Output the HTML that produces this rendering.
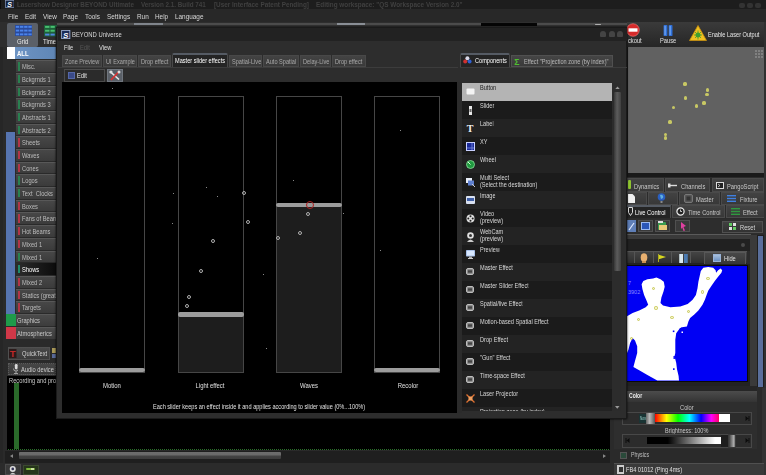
<!DOCTYPE html>
<html><head><meta charset="utf-8"><title>BEYOND Universe</title>
<style>
html,body{margin:0;padding:0;}
body{width:766px;height:475px;overflow:hidden;background:#2a2a2a;position:relative;font-family:"Liberation Sans",sans-serif;}
div,span.t,svg{position:absolute;box-sizing:border-box;}
span.t{white-space:nowrap;transform-origin:0 0;line-height:1;filter:blur(0.3px);}
</style></head><body>

<div style="left:0px;top:0px;width:766px;height:10px;background:#1d1d1d;"></div>
<svg style="left:4.5px;top:0px" width="9.5" height="8" viewBox="0 0 9.5 8"><rect width="9.5" height="8" fill="#12203c"/><rect x="0.4" y="0.4" width="8.7" height="7.2" fill="none" stroke="#8a9ab8" stroke-width="0.7"/><text x="2" y="6.9" font-family="Liberation Sans, sans-serif" font-weight="bold" font-style="italic" font-size="7.5" fill="#ffffff">S</text></svg>
<div style="left:0px;top:0px;width:1.2px;height:475px;background:#0c0c0c;"></div>
<span class="t" style="left:17px;top:1px;color:#404040;font-size:7.5px;transform:scaleX(0.84);font-weight:bold;">Lasershow Designer BEYOND Ultimate</span>
<span class="t" style="left:141px;top:1px;color:#404040;font-size:7.5px;transform:scaleX(0.84);font-weight:bold;">Version 2.1. Build 741</span>
<span class="t" style="left:214px;top:1px;color:#404040;font-size:7.5px;transform:scaleX(0.85);font-weight:bold;">[User Interface Patent Pending]</span>
<span class="t" style="left:316px;top:1px;color:#404040;font-size:7.5px;transform:scaleX(0.85);font-weight:bold;">Editing workspace: "QS Workspace Version 2.0"</span>
<div style="left:739px;top:3px;width:6px;height:5px;background:#333;border-radius:2px;"></div>
<div style="left:747px;top:3px;width:6px;height:5px;background:#333;border-radius:2px;"></div>
<div style="left:755px;top:3px;width:6px;height:5px;background:#333;border-radius:2px;"></div>
<div style="left:0px;top:9.3px;width:766px;height:13px;background:#282828;"></div>
<span class="t" style="left:8px;top:12.7px;color:#d8d8d8;font-size:8px;transform:scaleX(0.8);">File</span>
<span class="t" style="left:24.5px;top:12.7px;color:#d8d8d8;font-size:8px;transform:scaleX(0.8);">Edit</span>
<span class="t" style="left:42.5px;top:12.7px;color:#d8d8d8;font-size:8px;transform:scaleX(0.8);">View</span>
<span class="t" style="left:63px;top:12.7px;color:#d8d8d8;font-size:8px;transform:scaleX(0.8);">Page</span>
<span class="t" style="left:85px;top:12.7px;color:#d8d8d8;font-size:8px;transform:scaleX(0.8);">Tools</span>
<span class="t" style="left:107px;top:12.7px;color:#d8d8d8;font-size:8px;transform:scaleX(0.8);">Settings</span>
<span class="t" style="left:137px;top:12.7px;color:#d8d8d8;font-size:8px;transform:scaleX(0.8);">Run</span>
<span class="t" style="left:155px;top:12.7px;color:#d8d8d8;font-size:8px;transform:scaleX(0.8);">Help</span>
<span class="t" style="left:175px;top:12.7px;color:#d8d8d8;font-size:8px;transform:scaleX(0.8);">Language</span>
<div style="left:0px;top:22px;width:766px;height:25px;background:#2e2e2e;"></div>
<div style="left:57px;top:22.5px;width:570px;height:2px;background:#4c4c4c;"></div>
<div style="left:57px;top:24.5px;width:570px;height:2.5px;background:#343434;"></div>
<div style="left:337px;top:23px;width:28px;height:2px;background:#8a8f96;"></div>
<div style="left:595px;top:23.5px;width:6px;height:1.8px;background:#b0b0b0;border-radius:1px;"></div>
<div style="left:134px;top:23px;width:29px;height:2px;background:#80858c;"></div>
<div style="left:481px;top:23px;width:56px;height:3px;background:#050505;"></div>
<div style="left:7px;top:23px;width:31px;height:24px;background:#5b6068;border-radius:2px;"></div>
<svg style="left:14.5px;top:25.3px" width="17.5" height="11.2" viewBox="0 0 21 12" preserveAspectRatio="none"><rect width="21" height="12" fill="#2a4a9a"/><g fill="#4a84ec"><rect x="1" y="1" width="4" height="2"/><rect x="6" y="1" width="4" height="2"/><rect x="11" y="1" width="4" height="2"/><rect x="16" y="1" width="4" height="2"/><rect x="1" y="5" width="4" height="2"/><rect x="6" y="5" width="4" height="2"/><rect x="11" y="5" width="4" height="2"/><rect x="16" y="5" width="4" height="2"/><rect x="1" y="9" width="4" height="2"/><rect x="6" y="9" width="4" height="2"/><rect x="11" y="9" width="4" height="2"/><rect x="16" y="9" width="4" height="2"/></g></svg>
<span class="t" style="left:17px;top:38px;color:#e8e8e8;font-size:7.5px;transform:scaleX(0.8);">Grid</span>
<svg style="left:44px;top:25px" width="13" height="11.5" viewBox="0 0 12 12" preserveAspectRatio="none"><rect width="12" height="12" fill="#1f5f3a"/><g fill="#48c070"><rect x="1" y="1" width="4" height="2"/><rect x="6" y="1" width="4" height="2"/><rect x="1" y="5" width="4" height="2"/><rect x="6" y="5" width="4" height="2"/></g><g fill="#4f86e0"><rect x="1" y="9" width="4" height="2"/><rect x="6" y="9" width="4" height="2"/></g></svg>
<span class="t" style="left:43px;top:38px;color:#e8e8e8;font-size:7.5px;transform:scaleX(0.8);">Timel</span>
<div style="left:0px;top:47px;width:57px;height:300px;background:#2a2a2a;"></div>
<div style="left:0px;top:47px;width:3px;height:428px;background:#262626;"></div>
<div style="left:7px;top:47px;width:50px;height:12.3px;background:linear-gradient(90deg,#7096c6,#5f86b6);"></div>
<div style="left:6.8px;top:47px;width:8px;height:12.3px;background:#ffffff;"></div>
<span class="t" style="left:16.8px;top:50px;color:#ffffff;font-size:7px;transform:scaleX(0.85);font-weight:bold;">ALL</span>
<div style="left:15.8px;top:60.3px;width:40.2px;height:11.7px;background:linear-gradient(#474747,#3b3b3b);border-top:1px solid #585858;"></div>
<div style="left:17.6px;top:62.3px;width:2.6px;height:8.3px;background:#2a8050;"></div>
<span class="t" style="left:22.3px;top:63.3px;color:#bcbcbc;font-size:7px;transform:scaleX(0.82);">Misc.</span>
<div style="left:15.8px;top:72.98px;width:40.2px;height:11.7px;background:linear-gradient(#474747,#3b3b3b);border-top:1px solid #585858;"></div>
<div style="left:17.6px;top:74.98px;width:2.6px;height:8.3px;background:#2a8050;"></div>
<span class="t" style="left:22.3px;top:75.98px;color:#bcbcbc;font-size:7px;transform:scaleX(0.82);">Bckgrnds 1</span>
<div style="left:15.8px;top:85.66px;width:40.2px;height:11.7px;background:linear-gradient(#474747,#3b3b3b);border-top:1px solid #585858;"></div>
<div style="left:17.6px;top:87.66px;width:2.6px;height:8.3px;background:#2a8050;"></div>
<span class="t" style="left:22.3px;top:88.66px;color:#bcbcbc;font-size:7px;transform:scaleX(0.82);">Bckgrnds 2</span>
<div style="left:15.8px;top:98.34px;width:40.2px;height:11.7px;background:linear-gradient(#474747,#3b3b3b);border-top:1px solid #585858;"></div>
<div style="left:17.6px;top:100.34px;width:2.6px;height:8.3px;background:#2a8050;"></div>
<span class="t" style="left:22.3px;top:101.34px;color:#bcbcbc;font-size:7px;transform:scaleX(0.82);">Bckgrnds 3</span>
<div style="left:15.8px;top:111.02px;width:40.2px;height:11.7px;background:linear-gradient(#474747,#3b3b3b);border-top:1px solid #585858;"></div>
<div style="left:17.6px;top:113.02px;width:2.6px;height:8.3px;background:#2a8050;"></div>
<span class="t" style="left:22.3px;top:114.02px;color:#bcbcbc;font-size:7px;transform:scaleX(0.82);">Abstracts 1</span>
<div style="left:15.8px;top:123.7px;width:40.2px;height:11.7px;background:linear-gradient(#474747,#3b3b3b);border-top:1px solid #585858;"></div>
<div style="left:17.6px;top:125.7px;width:2.6px;height:8.3px;background:#2a8050;"></div>
<span class="t" style="left:22.3px;top:126.7px;color:#bcbcbc;font-size:7px;transform:scaleX(0.82);">Abstracts 2</span>
<div style="left:15.8px;top:136.38px;width:40.2px;height:11.7px;background:linear-gradient(#474747,#3b3b3b);border-top:1px solid #585858;"></div>
<div style="left:17.6px;top:138.38px;width:2.6px;height:8.3px;background:#b03548;"></div>
<span class="t" style="left:22.3px;top:139.38px;color:#bcbcbc;font-size:7px;transform:scaleX(0.82);">Sheets</span>
<div style="left:15.8px;top:149.06px;width:40.2px;height:11.7px;background:linear-gradient(#474747,#3b3b3b);border-top:1px solid #585858;"></div>
<div style="left:17.6px;top:151.06px;width:2.6px;height:8.3px;background:#b03548;"></div>
<span class="t" style="left:22.3px;top:152.06px;color:#bcbcbc;font-size:7px;transform:scaleX(0.82);">Waves</span>
<div style="left:15.8px;top:161.74px;width:40.2px;height:11.7px;background:linear-gradient(#474747,#3b3b3b);border-top:1px solid #585858;"></div>
<div style="left:17.6px;top:163.74px;width:2.6px;height:8.3px;background:#b03548;"></div>
<span class="t" style="left:22.3px;top:164.74px;color:#bcbcbc;font-size:7px;transform:scaleX(0.82);">Cones</span>
<div style="left:15.8px;top:174.42px;width:40.2px;height:11.7px;background:linear-gradient(#474747,#3b3b3b);border-top:1px solid #585858;"></div>
<div style="left:17.6px;top:176.42px;width:2.6px;height:8.3px;background:#2a8050;"></div>
<span class="t" style="left:22.3px;top:177.42px;color:#bcbcbc;font-size:7px;transform:scaleX(0.82);">Logos</span>
<div style="left:15.8px;top:187.1px;width:40.2px;height:11.7px;background:linear-gradient(#474747,#3b3b3b);border-top:1px solid #585858;"></div>
<div style="left:17.6px;top:189.1px;width:2.6px;height:8.3px;background:#2a8050;"></div>
<span class="t" style="left:22.3px;top:190.1px;color:#bcbcbc;font-size:7px;transform:scaleX(0.82);">Text&nbsp; Clocks</span>
<div style="left:15.8px;top:199.78px;width:40.2px;height:11.7px;background:linear-gradient(#474747,#3b3b3b);border-top:1px solid #585858;"></div>
<div style="left:17.6px;top:201.78px;width:2.6px;height:8.3px;background:#b03548;"></div>
<span class="t" style="left:22.3px;top:202.78px;color:#bcbcbc;font-size:7px;transform:scaleX(0.82);">Boxes</span>
<div style="left:15.8px;top:212.46px;width:40.2px;height:11.7px;background:linear-gradient(#474747,#3b3b3b);border-top:1px solid #585858;"></div>
<div style="left:17.6px;top:214.46px;width:2.6px;height:8.3px;background:#b03548;"></div>
<span class="t" style="left:22.3px;top:215.46px;color:#bcbcbc;font-size:7px;transform:scaleX(0.82);">Fans of Beam</span>
<div style="left:15.8px;top:225.14px;width:40.2px;height:11.7px;background:linear-gradient(#474747,#3b3b3b);border-top:1px solid #585858;"></div>
<div style="left:17.6px;top:227.14px;width:2.6px;height:8.3px;background:#b03548;"></div>
<span class="t" style="left:22.3px;top:228.14px;color:#bcbcbc;font-size:7px;transform:scaleX(0.82);">Hot Beams</span>
<div style="left:15.8px;top:237.82px;width:40.2px;height:11.7px;background:linear-gradient(#474747,#3b3b3b);border-top:1px solid #585858;"></div>
<div style="left:17.6px;top:239.82px;width:2.6px;height:8.3px;background:#b03548;"></div>
<span class="t" style="left:22.3px;top:240.82px;color:#bcbcbc;font-size:7px;transform:scaleX(0.82);">Mixed 1</span>
<div style="left:15.8px;top:250.5px;width:40.2px;height:11.7px;background:linear-gradient(#474747,#3b3b3b);border-top:1px solid #585858;"></div>
<div style="left:17.6px;top:252.5px;width:2.6px;height:8.3px;background:#2a8050;"></div>
<span class="t" style="left:22.3px;top:253.5px;color:#bcbcbc;font-size:7px;transform:scaleX(0.82);">Mixed 1</span>
<div style="left:15.8px;top:263.18px;width:40.2px;height:11.7px;background:linear-gradient(90deg,#2c2c2c,#0c0c0c);"></div>
<div style="left:17.6px;top:265.18px;width:2.6px;height:8.3px;background:#208a6a;"></div>
<span class="t" style="left:22.3px;top:266.18px;color:#ffffff;font-size:7px;transform:scaleX(0.82);">Shows</span>
<div style="left:15.8px;top:275.86px;width:40.2px;height:11.7px;background:linear-gradient(#474747,#3b3b3b);border-top:1px solid #585858;"></div>
<div style="left:17.6px;top:277.86px;width:2.6px;height:8.3px;background:#b03548;"></div>
<span class="t" style="left:22.3px;top:278.86px;color:#bcbcbc;font-size:7px;transform:scaleX(0.82);">Mixed 2</span>
<div style="left:15.8px;top:288.54px;width:40.2px;height:11.7px;background:linear-gradient(#474747,#3b3b3b);border-top:1px solid #585858;"></div>
<div style="left:17.6px;top:290.54px;width:2.6px;height:8.3px;background:#b03548;"></div>
<span class="t" style="left:22.3px;top:291.54px;color:#bcbcbc;font-size:7px;transform:scaleX(0.82);">Statics (great</span>
<div style="left:15.8px;top:301.22px;width:40.2px;height:11.7px;background:linear-gradient(#474747,#3b3b3b);border-top:1px solid #585858;"></div>
<div style="left:17.6px;top:303.22px;width:2.6px;height:8.3px;background:#b03548;"></div>
<span class="t" style="left:22.3px;top:304.22px;color:#bcbcbc;font-size:7px;transform:scaleX(0.82);">Targets</span>
<div style="left:6.3px;top:132px;width:8.7px;height:181.7px;background:#5674b0;"></div>
<div style="left:7px;top:314.0px;width:50px;height:12px;background:linear-gradient(#4b4b4b,#3c3c3c);border-top:1px solid #585858;"></div>
<div style="left:6.3px;top:313.7px;width:9.3px;height:12.3px;background:#1f9a4a;"></div>
<span class="t" style="left:17px;top:317.0px;color:#c8c8c8;font-size:7px;transform:scaleX(0.82);">Graphics</span>
<div style="left:7px;top:326.8px;width:50px;height:12px;background:linear-gradient(#4b4b4b,#3c3c3c);border-top:1px solid #585858;"></div>
<div style="left:6.3px;top:326.5px;width:9.3px;height:12.3px;background:#d03848;"></div>
<span class="t" style="left:17px;top:329.8px;color:#c8c8c8;font-size:7px;transform:scaleX(0.82);">Atmospherics</span>
<div style="left:7.5px;top:347px;width:42.5px;height:13px;background:linear-gradient(#484848,#3a3a3a);border:1px solid #505050;"></div>
<svg style="left:9px;top:349px" width="7.5" height="9" viewBox="0 0 7.5 9"><rect width="7.5" height="9" fill="#2a1a1a"/><text x="0.7" y="8" font-family="Liberation Sans, sans-serif" font-weight="bold" font-size="9.5" fill="#c02828">T</text></svg>
<span class="t" style="left:22px;top:349.5px;color:#d0d0d0;font-size:7px;transform:scaleX(0.82);">QuickText</span>
<div style="left:51.5px;top:348px;width:4.5px;height:4.5px;background:#a89858;"></div>
<div style="left:51.5px;top:353.5px;width:4.5px;height:4.5px;background:#5a6a98;"></div>
<div style="left:8.4px;top:363px;width:48px;height:11.7px;background:linear-gradient(#464646,#3a3a3a);border:1px dotted #5a5a5a;"></div>
<svg style="left:12.5px;top:364px" width="5.5" height="10" viewBox="0 0 6 11"><rect x="2" y="0" width="3" height="6" rx="1.5" fill="#ddd"/><path d="M0.5 5a2.8 2.8 0 0 0 5.6 0M3.3 8v2M1 10.5h4.5" stroke="#bbb" fill="none" stroke-width="0.9"/></svg>
<span class="t" style="left:21px;top:365.5px;color:#d0d0d0;font-size:7px;transform:scaleX(0.82);">Audio device</span>
<div style="left:6.5px;top:376.3px;width:603.5px;height:74.2px;background:#000;"></div>
<span class="t" style="left:9px;top:377px;color:#c8c8c8;font-size:7px;transform:scaleX(0.82);">Recording and pro</span>
<div style="left:14px;top:383px;width:5.3px;height:66px;background:#2a6a2a;"></div>
<div style="left:8px;top:448.8px;width:601px;height:1.2px;background:repeating-linear-gradient(90deg,#2a6e2a 0 1px,transparent 1px 2px);"></div>
<div style="left:5px;top:450.5px;width:605px;height:12.7px;background:#1f1f1f;"></div>
<div style="left:19px;top:451.7px;width:588px;height:3.6px;background-image:radial-gradient(#444 0.5px,transparent 0.7px);background-size:2px 1.8px;"></div>
<div style="left:19px;top:452px;width:261.5px;height:7.3px;background:linear-gradient(#6e6e6e,#6a6a6a 45%,#444 55%,#3c3c3c);border-radius:1px;"></div>
<svg style="left:10px;top:454px" width="3" height="4" viewBox="0 0 4 5"><path d="M4 0L0 2.5L4 5z" fill="#888"/></svg>
<svg style="left:603px;top:454px" width="3" height="4" viewBox="0 0 4 5"><path d="M0 0L4 2.5L0 5z" fill="#888"/></svg>
<div style="left:0px;top:463.2px;width:614px;height:11.8px;background:#2b2b2b;"></div>
<div style="left:4.5px;top:464px;width:16px;height:11px;background:#383838;border:1px solid #4a4a4a;"></div>
<svg style="left:9px;top:464.7px" width="7.5" height="10" viewBox="0 0 10 12"><circle cx="5" cy="4.5" r="4" fill="#ddd"/><circle cx="5" cy="4.5" r="1.8" fill="#335"/><path d="M1 12q4-5 8 0z" fill="#ccc"/></svg>
<div style="left:22.7px;top:464.5px;width:16px;height:10.5px;background:#25351a;border:1px solid #3c4a30;"></div>
<div style="left:26px;top:467.7px;width:8.5px;height:2.6px;background:#7fb83a;border-radius:1px;"></div>
<div style="left:30.5px;top:468.2px;width:3.5px;height:1.6px;background:#c8e0a0;"></div>
<div style="left:627px;top:22px;width:139px;height:25px;background:linear-gradient(#3a3a3a,#262626);"></div>
<svg style="left:627px;top:23px" width="14" height="14" viewBox="0 0 14 14"><circle cx="6" cy="7" r="6.3" fill="#d62a2a"/><circle cx="6" cy="7" r="6.3" fill="none" stroke="#f08080" stroke-width="0.6"/><rect x="1.5" y="5.3" width="9" height="3.4" fill="#fff"/></svg>
<span class="t" style="left:628px;top:37px;color:#e0e0e0;font-size:7px;transform:scaleX(0.82);">ckout</span>
<svg style="left:663px;top:25px" width="10.5" height="11" viewBox="0 0 12 13"><rect x="0.5" y="0" width="4.5" height="13" rx="1" fill="#2f6fd8"/><rect x="6.5" y="0" width="4.5" height="13" rx="1" fill="#2f6fd8"/><rect x="1.5" y="1" width="1.5" height="11" fill="#6fa4f0"/><rect x="7.5" y="1" width="1.5" height="11" fill="#6fa4f0"/></svg>
<span class="t" style="left:660px;top:37px;color:#e0e0e0;font-size:7px;transform:scaleX(0.82);">Pause</span>
<svg style="left:689px;top:25px" width="18" height="16" viewBox="0 0 18 16"><path d="M9 0.5L17.5 15.5H0.5z" fill="#f0c020" stroke="#c89010" stroke-width="0.8"/><circle cx="9" cy="10" r="2.5" fill="#40a030"/><path d="M9 5.5v9M5 10h8M6 7l6 6M12 7l-6 6" stroke="#40a030" stroke-width="0.8"/></svg>
<span class="t" style="left:708px;top:31px;color:#e8e8e8;font-size:7px;transform:scaleX(0.8);">Enable Laser Output</span>
<div style="left:627px;top:47px;width:139px;height:130px;background:#1a1a1a;"></div>
<div style="left:628px;top:46.5px;width:136px;height:126.3px;background:#616161;"></div>
<svg style="left:755px;top:50px" width="8" height="8" viewBox="0 0 8 8"><g fill="#808080"><rect x="0" y="0" width="2" height="2"/><rect x="3" y="0" width="2" height="2"/><rect x="6" y="0" width="2" height="2"/><rect x="0" y="3" width="2" height="2"/><rect x="3" y="3" width="2" height="2"/><rect x="6" y="3" width="2" height="2"/><rect x="0" y="6" width="2" height="2"/><rect x="3" y="6" width="2" height="2"/><rect x="6" y="6" width="2" height="2"/></g></svg>
<div style="left:683.4px;top:82.4px;width:3.2px;height:3.2px;border-radius:50%;background:#c8c864;"></div>
<div style="left:705.9px;top:88.4px;width:3.2px;height:3.2px;border-radius:50%;background:#c8c864;"></div>
<div style="left:705.4px;top:93.10000000000001px;width:3.2px;height:3.2px;border-radius:50%;background:#c8c864;"></div>
<div style="left:684.0px;top:96.4px;width:3.2px;height:3.2px;border-radius:50%;background:#c8c864;"></div>
<div style="left:702.4px;top:101.4px;width:3.2px;height:3.2px;border-radius:50%;background:#c8c864;"></div>
<div style="left:694.9px;top:104.4px;width:3.2px;height:3.2px;border-radius:50%;background:#c8c864;"></div>
<div style="left:672.1999999999999px;top:105.80000000000001px;width:3.2px;height:3.2px;border-radius:50%;background:#c8c864;"></div>
<div style="left:668.4px;top:120.4px;width:3.2px;height:3.2px;border-radius:50%;background:#c8c864;"></div>
<div style="left:664.0px;top:133.0px;width:3.2px;height:3.2px;border-radius:50%;background:#c8c864;"></div>
<div style="left:664.0px;top:136.4px;width:3.2px;height:3.2px;border-radius:50%;background:#c8c864;"></div>
<div style="left:627px;top:176.5px;width:139px;height:60px;background:#2b2b2b;"></div>
<div style="left:620px;top:178px;width:44px;height:14px;background:linear-gradient(#424242,#383838);border:1px solid #4a4a4a;"></div>
<span class="t" style="left:634px;top:182.5px;color:#c8c8c8;font-size:7px;transform:scaleX(0.82);">Dynamics</span>
<div style="left:627.6px;top:180px;width:3.2px;height:8.5px;background:#8fc430;border-radius:1px;"></div>
<div style="left:665px;top:178px;width:45px;height:14px;background:linear-gradient(#424242,#383838);border:1px solid #4a4a4a;"></div>
<span class="t" style="left:681px;top:182.5px;color:#c8c8c8;font-size:7px;transform:scaleX(0.82);">Channels</span>
<svg style="left:668px;top:183px" width="9" height="5" viewBox="0 0 9 5"><rect x="0" y="0.5" width="2.5" height="4" fill="#ddd"/><rect x="2" y="1.8" width="7" height="1.4" fill="#ddd"/></svg>
<div style="left:711.5px;top:178px;width:52.5px;height:14px;background:linear-gradient(#424242,#383838);border:1px solid #4a4a4a;"></div>
<span class="t" style="left:727px;top:182.5px;color:#c8c8c8;font-size:7px;transform:scaleX(0.82);">PangoScript</span>
<svg style="left:716px;top:182px" width="8" height="7" viewBox="0 0 8 7"><rect x="0.5" y="0.5" width="7" height="6" fill="#222" stroke="#ddd" stroke-width="1"/><path d="M2 2l2 1.5L2 5" stroke="#ddd" fill="none" stroke-width="0.8"/></svg>
<div style="left:620px;top:192px;width:27px;height:13px;background:linear-gradient(#424242,#383838);border:1px solid #4a4a4a;"></div>
<svg style="left:628px;top:194px" width="7" height="9" viewBox="0 0 7 9"><path d="M0 0h4.5L7 2.5V9H0z" fill="#f0f0f0"/></svg>
<div style="left:648px;top:192px;width:30px;height:13px;background:linear-gradient(#424242,#383838);border:1px solid #4a4a4a;"></div>
<svg style="left:657px;top:193px" width="9" height="10" viewBox="0 0 9 10"><circle cx="4.5" cy="4" r="3.8" fill="#2a5fc0"/><path d="M3 2q2-1 3 1t-2 3z" fill="#5fb0e0"/><rect x="3.5" y="8" width="2" height="2" fill="#888"/></svg>
<div style="left:679px;top:192px;width:41px;height:13px;background:linear-gradient(#424242,#383838);border:1px solid #4a4a4a;"></div>
<span class="t" style="left:696px;top:195.5px;color:#c8c8c8;font-size:7px;transform:scaleX(0.82);">Master</span>
<svg style="left:684px;top:194px" width="9" height="9" viewBox="0 0 9 9"><rect x="0.5" y="0.5" width="8" height="8" rx="1.5" fill="#555" stroke="#777"/><rect x="2.5" y="2.5" width="4" height="4" fill="#333"/></svg>
<div style="left:721px;top:192px;width:44px;height:13px;background:linear-gradient(#424242,#383838);border:1px solid #4a4a4a;"></div>
<span class="t" style="left:740px;top:195.5px;color:#c8c8c8;font-size:7px;transform:scaleX(0.82);">Fixture</span>
<svg style="left:727px;top:195px" width="9" height="7" viewBox="0 0 9 7"><g fill="#3f7fe0"><rect y="0" width="9" height="1.4"/><rect y="2.8" width="9" height="1.4"/><rect y="5.6" width="9" height="1.4"/></g></svg>
<div style="left:620px;top:205px;width:51px;height:13px;background:#242424;border:1px solid #4a4a4a;border-bottom:none;border-top:2px solid #555b64;"></div>
<span class="t" style="left:635px;top:208.5px;color:#ffffff;font-size:7px;transform:scaleX(0.82);">Live Control</span>
<svg style="left:628px;top:207px" width="5" height="9" viewBox="0 0 5 9"><path d="M0.5 0.5h4v5l-2 3l-2-3z" fill="none" stroke="#ddd" stroke-width="1"/></svg>
<div style="left:672px;top:205px;width:53px;height:13px;background:linear-gradient(#424242,#383838);border:1px solid #4a4a4a;"></div>
<span class="t" style="left:688px;top:208.5px;color:#c8c8c8;font-size:7px;transform:scaleX(0.82);">Time Control</span>
<svg style="left:676px;top:207px" width="9" height="9" viewBox="0 0 9 9"><circle cx="4.5" cy="4.5" r="3.6" fill="#222" stroke="#eee" stroke-width="1.2"/><path d="M4.5 2.5v2h1.5" stroke="#eee" fill="none" stroke-width="0.8"/></svg>
<div style="left:726px;top:205px;width:39px;height:13px;background:linear-gradient(#424242,#383838);border:1px solid #4a4a4a;"></div>
<span class="t" style="left:743px;top:208.5px;color:#c8c8c8;font-size:7px;transform:scaleX(0.82);">Effect</span>
<svg style="left:731px;top:208px" width="9" height="7" viewBox="0 0 9 7"><g fill="#2f9a3f"><rect y="0" width="9" height="1.4"/><rect y="2.8" width="9" height="1.4"/><rect y="5.6" width="9" height="1.4"/></g></svg>
<div style="left:627px;top:219px;width:139px;height:15px;background:#2d2d2d;"></div>
<div style="left:627px;top:220px;width:9px;height:12px;background:#5f7fb8;"></div>
<svg style="left:628px;top:222px" width="7" height="9" viewBox="0 0 7 9"><path d="M1 8L6 1" stroke="#dfe8ff" stroke-width="1.2"/></svg>
<div style="left:638px;top:220px;width:15px;height:12px;background:#3a3a3a;border:1px solid #505050;"></div>
<div style="left:641px;top:222px;width:9px;height:8px;background:#2a56b8;border:1px solid #9ab8f0;"></div>
<div style="left:655px;top:220px;width:15px;height:12px;background:#3a3a3a;border:1px solid #505050;"></div>
<div style="left:658px;top:222px;width:8px;height:8px;background:#3a9a50;border-radius:1px;"></div>
<div style="left:659px;top:225px;width:8px;height:5px;background:#e8c878;"></div>
<div style="left:658px;top:221px;width:5px;height:2px;background:#e0e0e0;"></div>
<div style="left:674.5px;top:220px;width:15px;height:12px;background:#3a3a3a;border:1px solid #505050;"></div>
<svg style="left:679.5px;top:222px" width="7" height="9" viewBox="0 0 7 9"><path d="M1 0L6 4L3.5 5L5 8.5L3.5 9L2.3 5.6L1 7z" fill="#e040a0"/></svg>
<div style="left:721.5px;top:220.5px;width:41px;height:12.5px;background:linear-gradient(#404040,#323232);border:1px solid #505050;"></div>
<svg style="left:729px;top:223px" width="7" height="7" viewBox="0 0 7 7"><g fill="#60c860"><rect x="0" y="0" width="3" height="3"/><rect x="4" y="4" width="3" height="3"/></g><g fill="#e0e0e0"><rect x="4" y="0" width="3" height="3"/><rect x="0" y="4" width="3" height="3"/></g></svg>
<span class="t" style="left:740px;top:224px;color:#d8d8d8;font-size:7px;transform:scaleX(0.82);">Reset</span>
<div style="left:627px;top:237px;width:124px;height:150px;background:#2b2b2b;"></div>
<div style="left:627px;top:234px;width:124px;height:1px;background:#5a5a5a;"></div>
<div style="left:627px;top:235px;width:124px;height:4px;background:#3a3a3a;"></div>
<div style="left:627px;top:239px;width:124px;height:12px;background:#212121;"></div>
<div style="left:741px;top:243px;width:4px;height:4px;background:#4a4a4a;border-radius:2px;"></div>
<div style="left:627px;top:251px;width:120px;height:13px;background:linear-gradient(#444,#2e2e2e);border-top:1px solid #555;border-bottom:1px solid #222;"></div>
<div style="left:634px;top:252px;width:1px;height:11px;background:#555;"></div>
<div style="left:653px;top:252px;width:1px;height:11px;background:#555;"></div>
<div style="left:671px;top:252px;width:1px;height:11px;background:#555;"></div>
<div style="left:690px;top:252px;width:1px;height:11px;background:#555;"></div>
<svg style="left:640px;top:253px" width="8" height="10" viewBox="0 0 8 10"><ellipse cx="4" cy="4.5" rx="3.3" ry="4.3" fill="#e8b070"/><rect x="2" y="8" width="4" height="2" fill="#c89050"/></svg>
<svg style="left:658px;top:254px" width="8" height="8" viewBox="0 0 8 8"><path d="M0 0.5L8 3L0 5.5z" fill="#d8d820"/><rect x="0" y="0" width="1" height="8" fill="#aa2"/></svg>
<svg style="left:678.5px;top:253.5px" width="9" height="9.5" viewBox="0 0 9 10"><rect width="4" height="10" fill="#d8e8f0"/><rect x="5" width="4" height="10" fill="#4a7ab0"/></svg>
<div style="left:704px;top:251.5px;width:41.5px;height:13px;background:linear-gradient(#484848,#363636);border:1px solid #585858;"></div>
<div style="left:713px;top:253.5px;width:7.5px;height:8px;background:linear-gradient(#a8c0dc,#6a90c4);border:1px solid #9ab4d8;"></div>
<span class="t" style="left:723.5px;top:254.5px;color:#e0e0e0;font-size:7px;transform:scaleX(0.82);">Hide</span>
<div style="left:627px;top:264px;width:124px;height:122px;background:#222;"></div>
<div style="left:627px;top:265px;width:121px;height:117px;background:#0a0a0a;"></div>
<div style="left:627px;top:266px;width:119.5px;height:114.5px;background:#0000f4;"></div>
<svg style="left:627px;top:266px" width="119.5" height="114.5" viewBox="627 266 119.5 114.5">
<path fill="#ffffff" d="M627 316.3 L632.6 313 L639.2 310.5 L645.7 307.2 L648.2 304.8 L646.6 300.7 L644.1 294.9 L642.4 289.1 L641.6 284.2 L643.3 280.9 L647.4 279.3 L653.1 278.4 L656.4 277.6 L660.5 279.3 L663.8 281.7 L664.7 286.7 L663.5 291.6 L661.4 297.4 L660.5 303.1 L663 305.6 L670.4 307.2 L680.3 306.4 L687.7 303.9 L692.6 299.8 L695.9 294.9 L697.5 288.3 L698.4 281.7 L699.7 276 L700.8 271 L703.3 267.8 L708.2 266.9 L713.2 267.8 L715.6 270.2 L716.1 272.7 L718.1 270.2 L720.6 268.6 L722.2 270.2 L721.4 272.7 L718.1 276.8 L714.8 280.9 L711.5 285.8 L708.2 290.8 L706.6 294.9 L704.9 299.8 L702.5 304.8 L698.4 310.5 L694.3 314.6 L690.1 317.9 L688.5 321.2 L686.9 326.6 L680.3 327.4 L678.6 329.9 L676.2 333.2 L675.3 339.7 L675.3 352.9 L674.5 356.2 L676.2 362.8 L677 369.3 L678.6 375.9 L679 380.5 L657.3 380.5 L647.4 375.1 L639.2 370.2 L633.4 366.9 L635 361.1 L637.2 352.9 L637.2 346.3 L635 340.6 L632.6 338.1 L630.1 343 L628.5 349.6 L627 352.9 Z"/>
<g fill="#0000f4"><rect x="672.8" y="330.5" width="1.6" height="1.6"/><rect x="673.5" y="356" width="1.4" height="3"/><rect x="673" y="368.3" width="1.6" height="1.6"/></g>
<g fill="#ffffff"><rect x="681.5" y="331.5" width="1.5" height="1.5"/><rect x="679" y="326" width="1.8" height="2"/></g>
<text x="628" y="285" font-size="5.5" fill="#8a8aff" font-family="Liberation Sans, sans-serif">7</text>
<text x="628" y="293.5" font-size="5.5" fill="#8a8aff" font-family="Liberation Sans, sans-serif">3902</text>
</svg>
<div style="left:651.9px;top:286.9px;width:3.2px;height:3.2px;border-radius:50%;border:0.8px solid #c8c858;background:#f4f4c8;"></div>
<div style="left:706.4px;top:276.7px;width:3.2px;height:3.2px;border-radius:50%;border:0.8px solid #c8c858;background:#f4f4c8;"></div>
<div style="left:700.8px;top:290.4px;width:3.2px;height:3.2px;border-radius:50%;border:0.8px solid #c8c858;background:#f4f4c8;"></div>
<div style="left:654.4px;top:306.4px;width:3.2px;height:3.2px;border-radius:50%;border:0.8px solid #c8c858;background:#f4f4c8;"></div>
<div style="left:686.6px;top:310.2px;width:3.2px;height:3.2px;border-radius:50%;border:0.8px solid #c8c858;background:#f4f4c8;"></div>
<div style="left:670.4px;top:315.9px;width:3.2px;height:3.2px;border-radius:50%;border:0.8px solid #c8c858;background:#f4f4c8;"></div>
<div style="left:636.9px;top:318.2px;width:3.2px;height:3.2px;border-radius:50%;border:0.8px solid #c8c858;background:#f4f4c8;"></div>
<div style="left:629.8px;top:337.2px;width:3.2px;height:3.2px;border-radius:50%;border:0.8px solid #c8c858;background:#f4f4c8;"></div>
<div style="left:750px;top:235px;width:7px;height:151px;background:#3a3a3a;"></div>
<div style="left:757px;top:235px;width:7px;height:152px;background:#1e1e1e;"></div>
<div style="left:758px;top:236px;width:5px;height:151px;background:#5a6f9c;"></div>
<div style="left:764px;top:22px;width:2px;height:453px;background:#303030;"></div>
<div style="left:761.5px;top:388px;width:4.5px;height:87px;background:#333;"></div>
<div style="left:614px;top:386px;width:143px;height:5px;background:#262626;"></div>
<div style="left:614px;top:391px;width:143px;height:11px;background:linear-gradient(#4c4c4c,#343434);"></div>
<span class="t" style="left:628.5px;top:393.3px;color:#e8e8e8;font-size:6.8px;transform:scaleX(0.74);font-weight:bold;">Color</span>
<div style="left:614px;top:402px;width:143px;height:48px;background:#2e2e2e;"></div>
<span class="t" style="left:679.5px;top:403.8px;color:#c8c8c8;font-size:7px;transform:scaleX(0.82);">Color</span>
<div style="left:622px;top:411.5px;width:130px;height:13px;background:#2c2c2c;border:1px solid #484848;"></div>
<div style="left:639.4px;top:413.5px;width:7px;height:9px;background:#1a3434;"></div>
<span class="t" style="left:639.8px;top:416px;color:#9fd8d0;font-size:5px;transform:scaleX(0.62);">None</span>
<div style="left:645.7px;top:412.8px;width:9.3px;height:11px;background:linear-gradient(90deg,#666,#b8b8b8 40%,#888 70%,#555);"></div>
<div style="left:655px;top:414px;width:63.5px;height:8px;background:linear-gradient(90deg,#ff0000,#ffff00 18%,#00ff00 36%,#00ffff 54%,#0000ff 72%,#ff00ff 88%,#ff0060);"></div>
<div style="left:718.5px;top:414px;width:11px;height:8px;background:#ffffff;"></div>
<svg style="left:745px;top:415.5px" width="5" height="5" viewBox="0 0 4 5"><path d="M0 0L3 2.5L0 5zM3 0h1v5H3z" fill="#0c0c0c"/></svg>
<span class="t" style="left:665px;top:426.8px;color:#c8c8c8;font-size:7px;transform:scaleX(0.79);">Brightness: 100%</span>
<div style="left:622px;top:434px;width:130px;height:13.5px;background:#2c2c2c;border:1px solid #484848;"></div>
<div style="left:646.5px;top:437.3px;width:74.5px;height:7px;background:linear-gradient(90deg,#000 0,#000 28%,#fff 92%);"></div>
<div style="left:721px;top:435px;width:6.5px;height:11.5px;background:#1e1e1e;"></div>
<div style="left:727.5px;top:434px;width:8.5px;height:13.5px;background:linear-gradient(90deg,#3a3a3a,#a8a8a8 75%,#777);border:1px solid #3a3a3a;"></div>
<svg style="left:624.5px;top:438px" width="5" height="5" viewBox="0 0 4 5"><path d="M4 0L1 2.5L4 5zM0 0h1v5H0z" fill="#0c0c0c"/></svg>
<svg style="left:745px;top:438px" width="5" height="5" viewBox="0 0 4 5"><path d="M0 0L3 2.5L0 5zM3 0h1v5H3z" fill="#0c0c0c"/></svg>
<div style="left:614px;top:449px;width:143px;height:14px;background:#2a2a2a;"></div>
<div style="left:614px;top:449px;width:143px;height:14px;background-image:radial-gradient(#484848 0.5px,transparent 0.6px);background-size:2px 2px;"></div>
<div style="left:620px;top:452px;width:7px;height:7px;background:#2a4a3a;border:1px solid #555;"></div>
<span class="t" style="left:630.5px;top:451.2px;color:#c0c0c0;font-size:7px;transform:scaleX(0.75);">Physics</span>
<div style="left:614px;top:463px;width:150px;height:12px;background:#3a3a3a;border-top:1px solid #505050;"></div>
<div style="left:617px;top:465px;width:7px;height:9px;background:#ccc;"></div>
<div style="left:619px;top:467px;width:4px;height:5px;background:#333;"></div>
<span class="t" style="left:625.5px;top:466px;color:#e0e0e0;font-size:7px;transform:scaleX(0.8);">FB4 01012 (Ping 4ms)</span>
<div style="left:56px;top:26.5px;width:571px;height:392px;background:#2d2d2d;border:1px solid #1a1a1a;box-shadow:0 0 2px #000;"></div>
<div style="left:58px;top:28px;width:569px;height:13px;background:#222;"></div>
<svg style="left:61px;top:30px" width="9.5" height="9" viewBox="0 0 9 9"><rect width="9" height="9" fill="#1a2c58"/><rect x="0.4" y="0.4" width="8.2" height="8.2" fill="none" stroke="#a8b8d8" stroke-width="0.8"/><text x="1.8" y="7.6" font-family="Liberation Sans, sans-serif" font-weight="bold" font-style="italic" font-size="8" fill="#ffffff">S</text></svg>
<span class="t" style="left:72px;top:31px;color:#d8d8d8;font-size:7px;transform:scaleX(0.84);">BEYOND Universe</span>
<div style="left:600px;top:31px;width:6px;height:6px;border-radius:3px 3px 1px 1px;background:#444;"></div>
<div style="left:608.5px;top:31px;width:6px;height:6px;border-radius:3px 3px 1px 1px;background:#444;"></div>
<div style="left:617px;top:31px;width:6px;height:6px;border-radius:3px 3px 1px 1px;background:#444;"></div>
<span class="t" style="left:64px;top:43.5px;color:#e0e0e0;font-size:7px;transform:scaleX(0.82);">File</span>
<span class="t" style="left:80px;top:43.5px;color:#555;font-size:7px;transform:scaleX(0.82);">Edit</span>
<span class="t" style="left:98.5px;top:43.5px;color:#e0e0e0;font-size:7px;transform:scaleX(0.82);">View</span>
<div style="left:62px;top:55px;width:40px;height:12px;background:linear-gradient(#434343,#3a3a3a);border:1px solid #484848;"></div>
<span class="t" style="left:65px;top:57.5px;color:#a8a8a8;font-size:7px;transform:scaleX(0.8);">Zone Preview</span>
<div style="left:103px;top:55px;width:34px;height:12px;background:linear-gradient(#434343,#3a3a3a);border:1px solid #484848;"></div>
<span class="t" style="left:106px;top:57.5px;color:#a8a8a8;font-size:7px;transform:scaleX(0.8);">UI Example</span>
<div style="left:138px;top:55px;width:33px;height:12px;background:linear-gradient(#434343,#3a3a3a);border:1px solid #484848;"></div>
<span class="t" style="left:141px;top:57.5px;color:#a8a8a8;font-size:7px;transform:scaleX(0.8);">Drop effect</span>
<div style="left:172px;top:52.7px;width:56px;height:15.3px;background:#242424;border:1px solid #484848;border-bottom:none;border-top:2px solid #555b64;border-radius:2px 2px 0 0;"></div>
<span class="t" style="left:175px;top:56.5px;color:#ffffff;font-size:7px;transform:scaleX(0.8);">Master slider effects</span>
<div style="left:229px;top:55px;width:33px;height:12px;background:linear-gradient(#434343,#3a3a3a);border:1px solid #484848;"></div>
<span class="t" style="left:232px;top:57.5px;color:#a8a8a8;font-size:7px;transform:scaleX(0.8);">Spatial-Live</span>
<div style="left:263px;top:55px;width:36px;height:12px;background:linear-gradient(#434343,#3a3a3a);border:1px solid #484848;"></div>
<span class="t" style="left:266px;top:57.5px;color:#a8a8a8;font-size:7px;transform:scaleX(0.8);">Auto Spatial</span>
<div style="left:300px;top:55px;width:31px;height:12px;background:linear-gradient(#434343,#3a3a3a);border:1px solid #484848;"></div>
<span class="t" style="left:303px;top:57.5px;color:#a8a8a8;font-size:7px;transform:scaleX(0.8);">Delay-Live</span>
<div style="left:332px;top:55px;width:34px;height:12px;background:linear-gradient(#434343,#3a3a3a);border:1px solid #484848;"></div>
<span class="t" style="left:335px;top:57.5px;color:#a8a8a8;font-size:7px;transform:scaleX(0.8);">Drop effect</span>
<div style="left:58px;top:67px;width:400px;height:1px;background:#3c3c3c;"></div>
<div style="left:64px;top:69px;width:41px;height:13px;background:#2b2b2b;border:1px solid #4c4c4c;"></div>
<div style="left:68px;top:71.5px;width:6.5px;height:7.5px;background:#3a4a88;border:1px solid #5568a8;"></div>
<span class="t" style="left:77.3px;top:72px;color:#e8e8e8;font-size:7px;transform:scaleX(0.82);">Edit</span>
<div style="left:107px;top:69px;width:16px;height:13px;background:#5a6068;border:1px solid #70767e;"></div>
<svg style="left:109px;top:70px" width="12" height="11" viewBox="0 0 12 11"><path d="M1 1.5L10 9.5" stroke="#e8e8e8" stroke-width="1.6"/><path d="M10.5 1L2 10" stroke="#d83030" stroke-width="1.8"/><circle cx="2" cy="2" r="1.6" fill="#ddd"/><circle cx="10" cy="2" r="1.5" fill="#ddd"/></svg>
<div style="left:62px;top:82px;width:395px;height:330.5px;background:#000;"></div>
<div style="left:78.5px;top:96px;width:66px;height:276.5px;background:#000;border:1px solid #464646;"></div>
<div style="left:78.5px;top:368.2px;width:66px;height:4.3px;background:#9c9c9c;border-radius:2px;"></div>
<div style="left:177.5px;top:96px;width:66px;height:276.5px;background:#000;border:1px solid #464646;"></div>
<div style="left:178.5px;top:314.5px;width:64px;height:57.0px;background:#1d1d1d;"></div>
<div style="left:177.5px;top:312.3px;width:66px;height:4.3px;background:#9c9c9c;border-radius:2px;"></div>
<div style="left:275.8px;top:96px;width:66px;height:276.5px;background:#000;border:1px solid #464646;"></div>
<div style="left:276.8px;top:205px;width:64px;height:166.5px;background:#1d1d1d;"></div>
<div style="left:275.8px;top:202.8px;width:66px;height:4.3px;background:#9c9c9c;border-radius:2px;"></div>
<div style="left:374.3px;top:96px;width:66px;height:276.5px;background:#000;border:1px solid #464646;"></div>
<div style="left:374.3px;top:368.2px;width:66px;height:4.3px;background:#9c9c9c;border-radius:2px;"></div>
<span class="t" style="left:72px;top:382px;width:80px;text-align:center;color:#e0e0e0;font-size:7px;transform:scaleX(0.85);transform-origin:50% 0;">Motion</span>
<span class="t" style="left:170px;top:382px;width:80px;text-align:center;color:#e0e0e0;font-size:7px;transform:scaleX(0.85);transform-origin:50% 0;">Light effect</span>
<span class="t" style="left:269px;top:382px;width:80px;text-align:center;color:#e0e0e0;font-size:7px;transform:scaleX(0.85);transform-origin:50% 0;">Waves</span>
<span class="t" style="left:368px;top:382px;width:80px;text-align:center;color:#e0e0e0;font-size:7px;transform:scaleX(0.85);transform-origin:50% 0;">Recolor</span>
<span class="t" style="left:153px;top:403px;color:#e0e0e0;font-size:7px;transform:scaleX(0.8);">Each slider keeps an effect inside it and applies according to slider value (0%...100%)</span>
<div style="left:241.5px;top:190.6px;width:4px;height:4px;border-radius:50%;border:0.8px solid #b0b0b0;"></div>
<div style="left:245.5px;top:220.2px;width:4px;height:4px;border-radius:50%;border:0.8px solid #b0b0b0;"></div>
<div style="left:210.5px;top:239px;width:4px;height:4px;border-radius:50%;border:0.8px solid #b0b0b0;"></div>
<div style="left:199.4px;top:268.7px;width:4px;height:4px;border-radius:50%;border:0.8px solid #b0b0b0;"></div>
<div style="left:187px;top:295px;width:4px;height:4px;border-radius:50%;border:0.8px solid #b0b0b0;"></div>
<div style="left:185px;top:303.7px;width:4px;height:4px;border-radius:50%;border:0.8px solid #b0b0b0;"></div>
<div style="left:275.8px;top:235.7px;width:4px;height:4px;border-radius:50%;border:0.8px solid #b0b0b0;"></div>
<div style="left:298px;top:230.6px;width:4px;height:4px;border-radius:50%;border:0.8px solid #b0b0b0;"></div>
<div style="left:306px;top:212.4px;width:4px;height:4px;border-radius:50%;border:0.8px solid #b0b0b0;"></div>
<div style="left:305.8px;top:200.7px;width:8px;height:8px;border-radius:50%;border:1px solid #b02020;"></div>
<div style="left:112px;top:88px;width:1px;height:1px;background:#888;"></div>
<div style="left:173px;top:192.5px;width:1px;height:1px;background:#888;"></div>
<div style="left:205.5px;top:187px;width:1px;height:1px;background:#888;"></div>
<div style="left:216.5px;top:195.5px;width:1px;height:1px;background:#888;"></div>
<div style="left:293px;top:180px;width:1px;height:1px;background:#888;"></div>
<div style="left:400px;top:130px;width:1px;height:1px;background:#888;"></div>
<div style="left:97px;top:258px;width:1px;height:1px;background:#888;"></div>
<div style="left:262.5px;top:274px;width:1px;height:1px;background:#888;"></div>
<div style="left:266px;top:348px;width:1px;height:1px;background:#888;"></div>
<div style="left:380px;top:250px;width:1px;height:1px;background:#888;"></div>
<div style="left:171.5px;top:222.5px;width:1px;height:1px;background:#888;"></div>
<div style="left:342.5px;top:212.5px;width:1px;height:1px;background:#888;"></div>
<div style="left:457px;top:82px;width:5px;height:331px;background:#2b2b2b;"></div>
<div style="left:460px;top:52.7px;width:50px;height:15.3px;background:#242424;border:1px solid #484848;border-bottom:none;border-top:2px solid #555b64;border-radius:2px 2px 0 0;"></div>
<svg style="left:463px;top:56px" width="9" height="8" viewBox="0 0 9 8"><circle cx="2.2" cy="5.5" r="2" fill="#d03030"/><circle cx="6.6" cy="5.5" r="2" fill="#3060d0"/><circle cx="4.4" cy="2.2" r="2" fill="#d8d8e8"/></svg>
<span class="t" style="left:475px;top:56.5px;color:#ffffff;font-size:7px;transform:scaleX(0.8);">Components</span>
<div style="left:511px;top:55px;width:102px;height:12px;background:linear-gradient(#454545,#3a3a3a);border:1px solid #505050;"></div>
<svg style="left:513.5px;top:56.5px" width="6" height="9" viewBox="0 0 6 9"><text x="0.3" y="7.6" font-family="Liberation Sans, sans-serif" font-weight="bold" font-size="8.5" fill="#50c030">Σ</text></svg>
<span class="t" style="left:524px;top:57.5px;color:#b8b8b8;font-size:7px;transform:scaleX(0.8);">Effect "Projection zone (by index)"</span>
<div style="left:460px;top:67px;width:167px;height:1px;background:#3c3c3c;"></div>
<div style="left:462px;top:83px;width:150px;height:328px;background:#1c1c1c;"></div>
<div style="left:462px;top:83px;width:150px;height:18px;background:#b4b4b4;"></div>
<svg style="left:466px;top:88px" width="9" height="7" viewBox="0 0 9 7"><rect x="0.5" y="0.5" width="8" height="6" rx="1" fill="#f4f4f4"/></svg>
<span class="t" style="left:480.3px;top:83.8px;color:#202020;font-size:6.6px;line-height:7px;transform:scaleX(0.85);height:17.2px;overflow:hidden;">Button</span>
<div style="left:462px;top:101px;width:150px;height:18px;background:#1b1b1b;"></div>
<svg style="left:466px;top:106px" width="9" height="9" viewBox="0 0 9 9"><rect x="3" y="0" width="3" height="9" fill="#e8e8e8"/><rect x="3.5" y="3" width="2" height="3" fill="#666"/></svg>
<span class="t" style="left:480.3px;top:101.8px;color:#d8d8d8;font-size:6.6px;line-height:7px;transform:scaleX(0.85);height:17.2px;overflow:hidden;">Slider</span>
<div style="left:462px;top:119px;width:150px;height:18px;background:#232323;"></div>
<svg style="left:466px;top:124px" width="9" height="9" viewBox="0 0 9 9"><text x="0.8" y="8" font-family="Liberation Serif, serif" font-weight="bold" font-size="10" fill="#f0f0f0">T</text></svg>
<span class="t" style="left:480.3px;top:119.8px;color:#d8d8d8;font-size:6.6px;line-height:7px;transform:scaleX(0.85);height:17.2px;overflow:hidden;">Label</span>
<div style="left:462px;top:137px;width:150px;height:18px;background:#1b1b1b;"></div>
<svg style="left:466px;top:142px" width="9" height="9" viewBox="0 0 9 9"><rect x="0.5" y="0.5" width="8" height="8" fill="#1a2a9a" stroke="#c8d0ff" stroke-width="1"/><path d="M6 1v7M1 6h7" stroke="#8090e0" stroke-width="0.8"/></svg>
<span class="t" style="left:480.3px;top:137.8px;color:#d8d8d8;font-size:6.6px;line-height:7px;transform:scaleX(0.85);height:17.2px;overflow:hidden;">XY</span>
<div style="left:462px;top:155px;width:150px;height:18px;background:#232323;"></div>
<svg style="left:466px;top:160px" width="9" height="9" viewBox="0 0 9 9"><circle cx="4.5" cy="4.5" r="4" fill="#1f9a3f" stroke="#90e0a0" stroke-width="0.8"/><path d="M4.5 4.5L2 2" stroke="#dfffdf" stroke-width="1"/></svg>
<span class="t" style="left:480.3px;top:155.8px;color:#d8d8d8;font-size:6.6px;line-height:7px;transform:scaleX(0.85);height:17.2px;overflow:hidden;">Wheel</span>
<div style="left:462px;top:173px;width:150px;height:18px;background:#1b1b1b;"></div>
<svg style="left:466px;top:178px" width="9" height="9" viewBox="0 0 9 9"><rect x="0" y="0" width="6" height="5" fill="#e8eef8"/><rect x="2" y="2.5" width="6" height="5" fill="#5f80d0"/><path d="M6 6l3 3" stroke="#ccc"/></svg>
<span class="t" style="left:480.3px;top:173.8px;color:#d8d8d8;font-size:6.6px;line-height:7px;transform:scaleX(0.85);height:17.2px;overflow:hidden;">Multi Select<br>(Select the destination)</span>
<div style="left:462px;top:191px;width:150px;height:18px;background:#232323;"></div>
<svg style="left:466px;top:196px" width="9" height="8" viewBox="0 0 9 8"><rect width="9" height="8" rx="1" fill="#d8e0f0"/><rect x="1" y="2" width="7" height="3" fill="#3f5fa8"/></svg>
<span class="t" style="left:480.3px;top:191.8px;color:#d8d8d8;font-size:6.6px;line-height:7px;transform:scaleX(0.85);height:17.2px;overflow:hidden;">Image</span>
<div style="left:462px;top:209px;width:150px;height:18px;background:#1b1b1b;"></div>
<svg style="left:466px;top:214px" width="9" height="9" viewBox="0 0 9 9"><circle cx="4.5" cy="4.5" r="4" fill="#e0e0e0"/><circle cx="4.5" cy="2.3" r="1" fill="#222"/><circle cx="4.5" cy="6.7" r="1" fill="#222"/><circle cx="2.3" cy="4.5" r="1" fill="#222"/><circle cx="6.7" cy="4.5" r="1" fill="#222"/></svg>
<span class="t" style="left:480.3px;top:209.8px;color:#d8d8d8;font-size:6.6px;line-height:7px;transform:scaleX(0.85);height:17.2px;overflow:hidden;">Video<br>(preview)</span>
<div style="left:462px;top:227px;width:150px;height:18px;background:#232323;"></div>
<svg style="left:466px;top:232px" width="9" height="10" viewBox="0 0 9 10"><circle cx="4.5" cy="3.5" r="3.3" fill="#e0e0e0"/><circle cx="4.5" cy="3.5" r="1.5" fill="#333"/><path d="M1 10q3.5-5 7 0z" fill="#ccc"/></svg>
<span class="t" style="left:480.3px;top:227.8px;color:#d8d8d8;font-size:6.6px;line-height:7px;transform:scaleX(0.85);height:17.2px;overflow:hidden;">WebCam<br>(preview)</span>
<div style="left:462px;top:245px;width:150px;height:18px;background:#1b1b1b;"></div>
<svg style="left:466px;top:250px" width="9" height="9" viewBox="0 0 9 9"><rect x="0" y="0" width="9" height="6.5" rx="0.8" fill="#a8c0e8"/><rect x="1" y="1" width="7" height="4.5" fill="#d8e8ff"/><rect x="3" y="6.5" width="3" height="1.5" fill="#aaa"/><rect x="2" y="8" width="5" height="1" fill="#ccc"/></svg>
<span class="t" style="left:480.3px;top:245.8px;color:#d8d8d8;font-size:6.6px;line-height:7px;transform:scaleX(0.85);height:17.2px;overflow:hidden;">Preview</span>
<div style="left:462px;top:263px;width:150px;height:18px;background:#232323;"></div>
<svg style="left:466px;top:268px" width="8" height="7" viewBox="0 0 8 7"><rect x="0.5" y="0.5" width="7" height="6" rx="1.5" fill="#8a8a8a" stroke="#c8c8c8" stroke-width="0.9"/><rect x="2" y="2.3" width="4" height="2.4" fill="#444"/></svg>
<span class="t" style="left:480.3px;top:263.8px;color:#d8d8d8;font-size:6.6px;line-height:7px;transform:scaleX(0.85);height:17.2px;overflow:hidden;">Master Effect</span>
<div style="left:462px;top:281px;width:150px;height:18px;background:#1b1b1b;"></div>
<svg style="left:466px;top:286px" width="8" height="7" viewBox="0 0 8 7"><rect x="0.5" y="0.5" width="7" height="6" rx="1.5" fill="#8a8a8a" stroke="#c8c8c8" stroke-width="0.9"/><rect x="2" y="2.3" width="4" height="2.4" fill="#444"/></svg>
<span class="t" style="left:480.3px;top:281.8px;color:#d8d8d8;font-size:6.6px;line-height:7px;transform:scaleX(0.85);height:17.2px;overflow:hidden;">Master Slider Effect</span>
<div style="left:462px;top:299px;width:150px;height:18px;background:#232323;"></div>
<svg style="left:466px;top:304px" width="8" height="7" viewBox="0 0 8 7"><rect x="0.5" y="0.5" width="7" height="6" rx="1.5" fill="#8a8a8a" stroke="#c8c8c8" stroke-width="0.9"/><rect x="2" y="2.3" width="4" height="2.4" fill="#444"/></svg>
<span class="t" style="left:480.3px;top:299.8px;color:#d8d8d8;font-size:6.6px;line-height:7px;transform:scaleX(0.85);height:17.2px;overflow:hidden;">Spatial/live Effect</span>
<div style="left:462px;top:317px;width:150px;height:18px;background:#1b1b1b;"></div>
<svg style="left:466px;top:322px" width="8" height="7" viewBox="0 0 8 7"><rect x="0.5" y="0.5" width="7" height="6" rx="1.5" fill="#8a8a8a" stroke="#c8c8c8" stroke-width="0.9"/><rect x="2" y="2.3" width="4" height="2.4" fill="#444"/></svg>
<span class="t" style="left:480.3px;top:317.8px;color:#d8d8d8;font-size:6.6px;line-height:7px;transform:scaleX(0.85);height:17.2px;overflow:hidden;">Motion-based Spatial Effect</span>
<div style="left:462px;top:335px;width:150px;height:18px;background:#232323;"></div>
<svg style="left:466px;top:340px" width="8" height="7" viewBox="0 0 8 7"><rect x="0.5" y="0.5" width="7" height="6" rx="1.5" fill="#8a8a8a" stroke="#c8c8c8" stroke-width="0.9"/><rect x="2" y="2.3" width="4" height="2.4" fill="#444"/></svg>
<span class="t" style="left:480.3px;top:335.8px;color:#d8d8d8;font-size:6.6px;line-height:7px;transform:scaleX(0.85);height:17.2px;overflow:hidden;">Drop Effect</span>
<div style="left:462px;top:353px;width:150px;height:18px;background:#1b1b1b;"></div>
<svg style="left:466px;top:358px" width="8" height="7" viewBox="0 0 8 7"><rect x="0.5" y="0.5" width="7" height="6" rx="1.5" fill="#8a8a8a" stroke="#c8c8c8" stroke-width="0.9"/><rect x="2" y="2.3" width="4" height="2.4" fill="#444"/></svg>
<span class="t" style="left:480.3px;top:353.8px;color:#d8d8d8;font-size:6.6px;line-height:7px;transform:scaleX(0.85);height:17.2px;overflow:hidden;">"Gun" Effect</span>
<div style="left:462px;top:371px;width:150px;height:18px;background:#232323;"></div>
<svg style="left:466px;top:376px" width="8" height="7" viewBox="0 0 8 7"><rect x="0.5" y="0.5" width="7" height="6" rx="1.5" fill="#8a8a8a" stroke="#c8c8c8" stroke-width="0.9"/><rect x="2" y="2.3" width="4" height="2.4" fill="#444"/></svg>
<span class="t" style="left:480.3px;top:371.8px;color:#d8d8d8;font-size:6.6px;line-height:7px;transform:scaleX(0.85);height:17.2px;overflow:hidden;">Time-space Effect</span>
<div style="left:462px;top:389px;width:150px;height:18px;background:#1b1b1b;"></div>
<svg style="left:466px;top:394px" width="9" height="9" viewBox="0 0 9 9"><path d="M0.5 0.5L8.5 8.5M8.5 0.5L0.5 8.5" stroke="#e07030" stroke-width="1.3"/><rect x="2.5" y="2.5" width="4" height="4" fill="#f0a060"/></svg>
<span class="t" style="left:480.3px;top:389.8px;color:#d8d8d8;font-size:6.6px;line-height:7px;transform:scaleX(0.85);height:17.2px;overflow:hidden;">Laser Projector</span>
<div style="left:462px;top:407px;width:150px;height:4px;background:#232323;"></div>
<span class="t" style="left:480.3px;top:407.8px;color:#d8d8d8;font-size:6.6px;line-height:7px;transform:scaleX(0.85);height:3.2px;overflow:hidden;">Projection zone (by index)</span>
<div style="left:612px;top:83px;width:9px;height:328px;background:#2c2c2c;"></div>
<div style="left:613.5px;top:92px;width:7px;height:179px;background:linear-gradient(90deg,#383838,#5c5c5c 45%,#404040);border-radius:1px;"></div>
<svg style="left:614.5px;top:86px" width="5" height="3.3" viewBox="0 0 6 4"><path d="M0 4L3 0.5L6 4z" fill="#999"/></svg>
<svg style="left:615px;top:405.5px" width="4.5" height="3" viewBox="0 0 6 4"><path d="M0 0L3 3.5L6 0z" fill="#999"/></svg>
</body></html>
